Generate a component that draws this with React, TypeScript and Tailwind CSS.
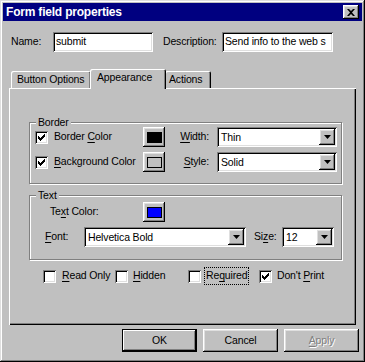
import React from "react";

const raised =
  "shadow-[inset_-1px_-1px_#000,inset_1px_1px_#fff,inset_-2px_-2px_#808080,inset_2px_2px_#dfdfdf]";
const sunken =
  "shadow-[inset_1px_1px_#808080,inset_-1px_-1px_#fff,inset_2px_2px_#000,inset_-2px_-2px_#dfdfdf]";

function U({ children }: { children: React.ReactNode }) {
  return <span className="underline underline-offset-[2px] decoration-1">{children}</span>;
}

function Check({ checked }: { checked?: boolean }) {
  return (
    <span className={`w-[13px] h-[13px] shrink-0 bg-white flex items-center justify-center ${sunken}`}>
      {checked && (
        <svg width="7" height="7" viewBox="0 0 7 7">
          <path d="M0 2h1v1h1v1h1v-1h1v-1h1v-1h1v-1h1v3h-1v1h-1v1h-1v1h-1v1h-1v-1h-1v-1h-1z" fill="#000" />
        </svg>
      )}
    </span>
  );
}

function Arrow() {
  return (
    <span className={`w-[16px] h-[16px] bg-[#c0c0c0] flex items-center justify-center shrink-0 ${raised}`}>
      <svg width="7" height="4" viewBox="0 0 7 4">
        <path d="M0 0h7l-3.5 4z" fill="#000" />
      </svg>
    </span>
  );
}

function Combo({ w, text }: { w: string; text: string }) {
  return (
    <div className={`${w} h-[20px] bg-white p-[2px] flex items-center ${sunken}`}>
      <span className="flex-1 pl-[2px] leading-none">{text}</span>
      <Arrow />
    </div>
  );
}

function Swatch({ color }: { color: string }) {
  return (
    <div className={`w-[22px] h-[20px] bg-[#c0c0c0] flex items-center justify-center ${raised}`}>
      <span className={`w-[15px] h-[11px] border border-[#000] ${color}`} />
    </div>
  );
}

function Group({ label, h, children }: { label: string; h: string; children: React.ReactNode }) {
  return (
    <div
      className={`relative ml-[20px] w-[313px] ${h} border border-[#808080] shadow-[inset_1px_1px_#fff,1px_1px_#fff]`}
    >
      <span className="absolute left-[6px] top-[-8px] px-[2px] bg-[#c0c0c0] leading-[14px]">{label}</span>
      {children}
    </div>
  );
}

function Btn({ children, def, disabled }: { children: React.ReactNode; def?: boolean; disabled?: boolean }) {
  return (
    <div
      className={`w-[75px] h-[23px] bg-[#c0c0c0] flex items-center justify-center ${
        def
          ? "shadow-[inset_0_0_0_1px_#000,inset_-2px_-2px_#000,inset_2px_2px_#fff,inset_-3px_-3px_#808080]"
          : raised
      } ${disabled ? "text-[#808080] [text-shadow:1px_1px_#fff]" : ""}`}
    >
      {children}
    </div>
  );
}

export default function App() {
  return (
    <div
      className="w-[365px] h-[362px] bg-[#c0c0c0] p-[3px] flex flex-col text-[10.5px] tracking-[-0.15px] text-black shadow-[inset_-1px_-1px_#000,inset_1px_1px_#dfdfdf,inset_-2px_-2px_#808080,inset_2px_2px_#fff]"
      style={{ fontFamily: '"Liberation Sans", Arial, sans-serif' }}
    >
      {/* Title bar */}
      <div className="h-[18px] bg-[#000080] flex items-center justify-between pl-[3px] pr-[3px]">
        <span className="text-white font-bold text-[12px] tracking-[-0.2px] leading-none">Form field properties</span>
        <div className={`w-[16px] h-[14px] bg-[#c0c0c0] flex items-center justify-center ${raised}`}>
          <svg width="8" height="7" viewBox="0 0 8 7">
            <path d="M0 0h2l2 2 2-2h2l-3 3.5 3 3.5h-2l-2-2-2 2h-2l3-3.5z" fill="#000" />
          </svg>
        </div>
      </div>

      {/* Name row */}
      <div className="mt-[11px] flex items-center h-[20px]">
        <span className="ml-[8px] w-[42px]">Name:</span>
        <div className={`w-[100px] h-[20px] bg-white flex items-center pl-[3px] ${sunken}`}>submit</div>
        <span className="ml-[10px] w-[59px]">Description:</span>
        <div className={`w-[111px] h-[20px] bg-white flex items-center pl-[3px] overflow-hidden whitespace-nowrap ${sunken}`}>
          Send info to the web s
        </div>
      </div>

      {/* Tabs */}
      <div className="mt-[17px] ml-[8px] flex items-end h-[19px]">
        <div className="w-[80px] h-[17px] bg-[#c0c0c0] rounded-tl-[2px] rounded-tr-[2px] pl-[6px] flex items-center shadow-[inset_1px_1px_#fff,inset_-1px_0_#000,inset_-2px_0_#808080]">
          Button Options
        </div>
        <div className="relative z-10 ml-[-1px] w-[76px] h-[20px] mb-[-1px] bg-[#c0c0c0] rounded-tl-[2px] rounded-tr-[2px] pl-[7px] pb-[3px] flex items-center shadow-[inset_1px_1px_#fff,inset_-1px_0_#000,inset_-2px_0_#808080]">
          Appearance
        </div>
        <div className="ml-[-1px] w-[46px] h-[17px] bg-[#c0c0c0] rounded-tl-[2px] rounded-tr-[2px] pl-[4px] flex items-center shadow-[inset_1px_1px_#fff,inset_-1px_0_#000,inset_-2px_0_#808080]">
          Actions
        </div>
      </div>

      {/* Panel */}
      <div className="ml-[6px] w-[347px] h-[237px] bg-[#c0c0c0] pt-[34px] flex flex-col shadow-[inset_1px_1px_#fff,inset_-1px_-1px_#000,inset_-2px_-2px_#808080]">
        <Group label="Border" h="h-[62px]">
          <div className="flex flex-col pt-[4px] gap-[5px]">
            <div className="flex items-center h-[20px]">
              <div className="w-[113px] pl-[5px] flex items-center gap-[6px]">
                <Check checked />
                <span>
                  Border <U>C</U>olor
                </span>
              </div>
              <Swatch color="bg-[#000]" />
              <span className="w-[52px] text-right pr-[8px]">
                <U>W</U>idth:
              </span>
              <Combo w="w-[120px]" text="Thin" />
            </div>
            <div className="flex items-center h-[20px]">
              <div className="w-[113px] pl-[5px] flex items-center gap-[6px]">
                <Check checked />
                <span>
                  <U>B</U>ackground Color
                </span>
              </div>
              <Swatch color="bg-[#c0c0c0]" />
              <span className="w-[52px] text-right pr-[8px]">
                <U>S</U>tyle:
              </span>
              <Combo w="w-[120px]" text="Solid" />
            </div>
          </div>
        </Group>

        <div className="h-[11px]" />

        <Group label="Text" h="h-[65px]">
          <div className="flex flex-col pt-[6px] gap-[5px]">
            <div className="flex items-center h-[20px]">
              <span className="ml-[20px] w-[93px]">
                Te<U>x</U>t Color:
              </span>
              <Swatch color="bg-[#0000ff]" />
            </div>
            <div className="flex items-center h-[20px]">
              <span className="ml-[15px] w-[39px]">
                <U>F</U>ont:
              </span>
              <Combo w="w-[162px]" text="Helvetica Bold" />
              <span className="w-[36px] pl-[8px]">
                Si<U>z</U>e:
              </span>
              <Combo w="w-[52px]" text="12" />
            </div>
          </div>
        </Group>

        <div className="mt-[9px] ml-[34px] flex items-center h-[14px]">
          <div className="w-[72px] flex items-center gap-[6px]">
            <Check />
            <span>
              <U>R</U>ead Only
            </span>
          </div>
          <div className="w-[73px] flex items-center gap-[5px]">
            <Check />
            <span>
              <U>H</U>idden
            </span>
          </div>
          <div className="w-[71px] flex items-center gap-[4px]">
            <Check />
            <span className="outline outline-1 outline-dotted outline-black px-[1px]">
              Re<U>q</U>uired
            </span>
          </div>
          <div className="flex items-center gap-[5px]">
            <Check checked />
            <span>
              Don't <U>P</U>rint
            </span>
          </div>
        </div>
      </div>

      {/* Buttons */}
      <div className="mt-[4px] flex justify-end gap-[6px] pr-[3px]">
        <Btn def>OK</Btn>
        <Btn>Cancel</Btn>
        <Btn disabled>
          <U>A</U>pply
        </Btn>
      </div>
    </div>
  );
}
